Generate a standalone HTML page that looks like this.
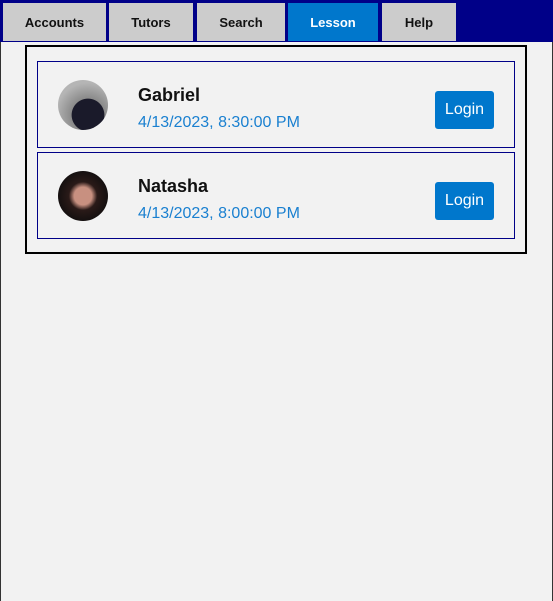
<!DOCTYPE html><html><head><style>
body{margin:0;width:553px;height:601px;background:#f2f2f2;font-family:"Liberation Sans",sans-serif;position:relative;overflow:hidden}
.frame{position:absolute;left:0;top:0;width:551px;height:601px;border-left:1px solid #333;border-right:1px solid #333}
.nav{position:absolute;left:0;top:0;width:553px;height:42px;background:#000088}
.tab{position:absolute;top:3px;height:38px;background:#cccccc;font-weight:bold;font-size:13px;display:flex;align-items:center;justify-content:center;color:#111}
.box{position:absolute;left:25px;top:45px;width:498px;height:205px;border:2px solid #000}
.card{position:absolute;left:37px;width:476px;height:85px;border:1px solid #000088}
.av{position:absolute;left:20px;top:18px;width:50px;height:50px;border-radius:50%}
.nm{position:absolute;left:100px;top:23px;font-size:18px;font-weight:bold;color:#111}
.dt{position:absolute;left:100px;top:52px;font-size:16px;color:#1a80d0}
.btn{position:absolute;left:397px;top:29px;width:59px;height:38px;background:#0077cc;border-radius:3px;color:#fff;font-size:16px;display:flex;align-items:center;justify-content:center}
</style></head><body>
<div class="frame"></div>
<div class="nav">
<div class="tab" style="left:3px;width:103px">Accounts</div>
<div class="tab" style="left:109px;width:84px">Tutors</div>
<div class="tab" style="left:197px;width:88px">Search</div>
<div class="tab" style="left:288px;width:90px;background:#0077cc;color:#fff">Lesson</div>
<div class="tab" style="left:382px;width:74px">Help</div>
</div>
<div class="box"></div>
<div class="card" style="top:61px"><div class="av" style="background:radial-gradient(circle at 60% 70%,#1a1a2a 0 35%,#8a8a8a 36%,#b5b5b5 70%)"></div><div class="nm">Gabriel</div><div class="dt">4/13/2023, 8:30:00 PM</div><div class="btn">Login</div></div>
<div class="card" style="top:152px"><div class="av" style="background:radial-gradient(circle at 50% 50%,#c89080 0 25%,#2a1a18 40%,#151010 70%)"></div><div class="nm">Natasha</div><div class="dt">4/13/2023, 8:00:00 PM</div><div class="btn">Login</div></div>
</body></html>
